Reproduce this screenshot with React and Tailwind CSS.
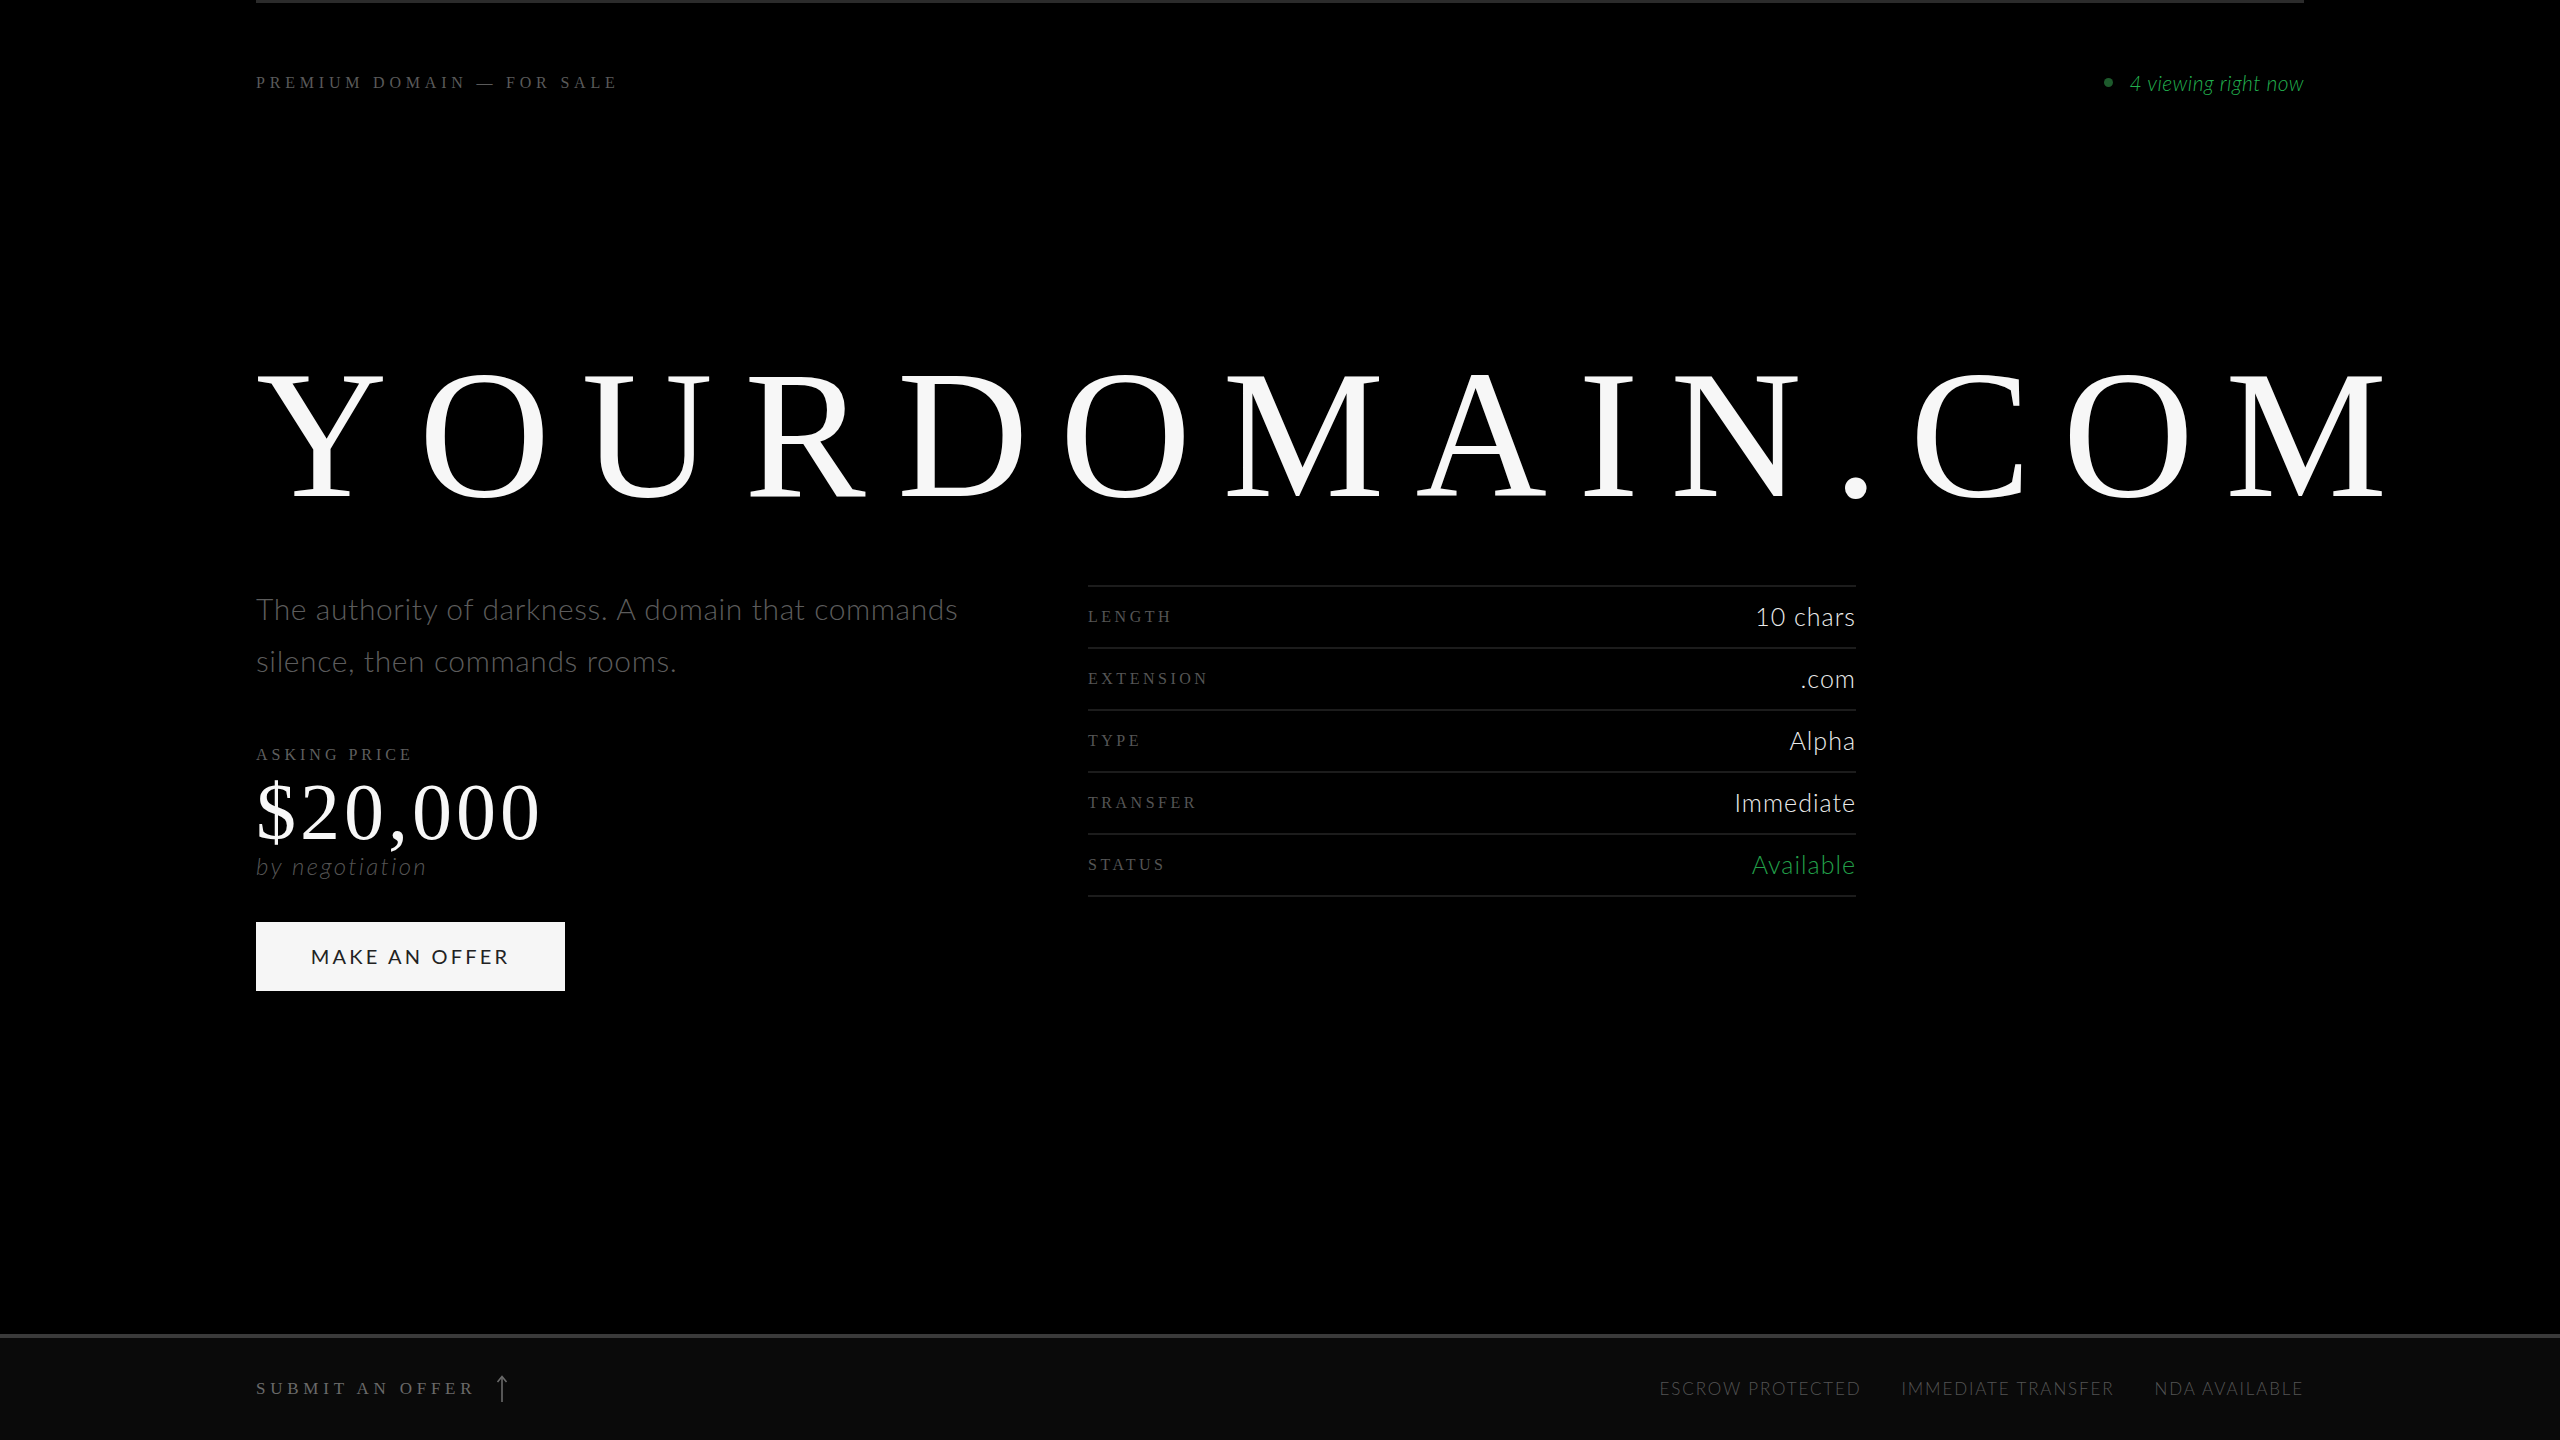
const specs = [
  { label: 'Length', value: '10 chars' },
  { label: 'Extension', value: '.com' },
  { label: 'Type', value: 'Alpha' },
  { label: 'Transfer', value: 'Immediate' },
  { label: 'Status', value: 'Available', accent: true },
];

const serif = "font-['Liberation_Serif',serif]";
const sans = "font-['Lato','Noto_Sans',sans-serif]";

const SpecRow = ({ label, value, accent }) => (
  <div className="flex items-center justify-between h-[62px] border-b-2 border-[#1c1c1c]">
    <span className={`${serif} text-[16px] uppercase tracking-[0.22em] text-[#555]`}>{label}</span>
    <span className={`${sans} font-light text-[25px] tracking-[0.04em] ${accent ? 'text-[#22a04a]' : 'text-[#ececec]'}`}>
      {value}
    </span>
  </div>
);

const ArrowUp = () => (
  <svg width="12" height="28" viewBox="0 0 12 28" fill="none" stroke="currentColor" strokeWidth="1.6">
    <path d="M6 27V2" />
    <path d="M1.5 7L6 1.5L10.5 7" />
  </svg>
);

export default function App() {
  return (
    <div className="min-h-screen h-[1440px] bg-black flex flex-col overflow-hidden">
      <div className="w-[2048px] mx-auto h-[3px] bg-[#2b2b2b]" />

      <header className="w-[2048px] mx-auto flex items-center justify-between pt-[64px]">
        <span className={`${serif} text-[16px] uppercase tracking-[0.3em] text-[#5a5a5a]`}>
          Premium Domain — For Sale
        </span>
        <span className="flex items-center gap-[16px]">
          <span className="w-[9px] h-[9px] rounded-full bg-[#1d5a2c]" />
          <span className={`${sans} font-light italic text-[21px] tracking-[0.02em] text-[#22b04f]`}>4 viewing right now</span>
        </span>
      </header>

      <main className="flex-1 w-[2048px] mx-auto pt-[245px]">
        <h1 className={`${serif} text-[182px] leading-none tracking-[0.172em] text-[#f7f7f7] whitespace-nowrap`}>
          YOURDOMAIN.COM
        </h1>

        <div className="grid grid-cols-[768px_768px] gap-[64px] mt-[59px]">
          <div>
            <p className={`${sans} font-light text-[30px] leading-[52px] tracking-[0.02em] text-[#5c5c5c] max-w-[740px] mt-[-3px]`}>
              The authority of darkness. A domain that commands silence, then commands rooms.
            </p>
            <div className={`${serif} text-[16px] uppercase tracking-[0.25em] text-[#5f5f5f] mt-[57px]`}>Asking Price</div>
            <div className={`${serif} text-[80px] leading-none tracking-[0.05em] text-[#f7f7f7] mt-[5px]`}>$20,000</div>
            <div className={`${sans} font-light italic text-[24px] tracking-[0.1em] text-[#555] mt-[-4px]`}>by negotiation</div>
            <button className={`${sans} mt-[38px] w-[309px] h-[69px] bg-[#f6f6f6] text-[#222] text-[20px] uppercase tracking-[0.16em]`}>
              Make an Offer
            </button>
          </div>

          <div className="border-t-2 border-[#1c1c1c] h-fit">
            {specs.map((s) => (
              <SpecRow key={s.label} {...s} />
            ))}
          </div>
        </div>
      </main>

      <footer className="bg-[#0a0a0a] border-t-4 border-[#3a3a3a] h-[106px] shrink-0">
        <div className="w-[2048px] mx-auto h-full flex items-center justify-between">
          <span className={`${serif} flex items-center gap-[20px] text-[17px] uppercase tracking-[0.28em] text-[#6a6a6a]`}>
            Submit an Offer
            <ArrowUp />
          </span>
          <div className={`${sans} font-light flex items-center gap-[40px] text-[17px] uppercase tracking-[0.11em] text-[#555]`}>
            <span>Escrow Protected</span>
            <span>Immediate Transfer</span>
            <span>NDA Available</span>
          </div>
        </div>
      </footer>
    </div>
  );
}
